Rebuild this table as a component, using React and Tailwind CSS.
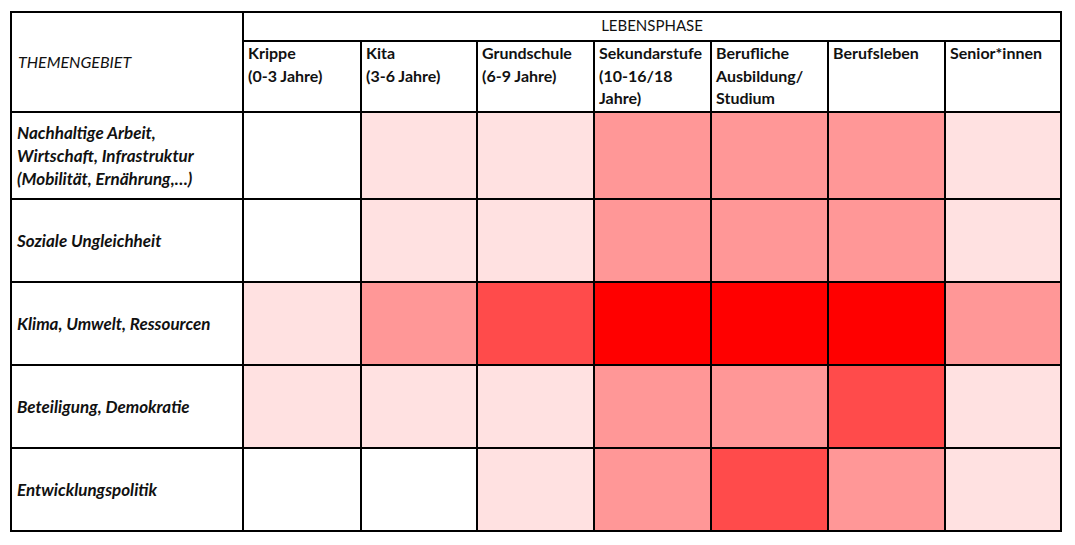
import React from "react";

const COLS = [
  ["Krippe", "(0-3 Jahre)"],
  ["Kita", "(3-6 Jahre)"],
  ["Grundschule", "(6-9 Jahre)"],
  ["Sekundarstufe", "(10-16/18", "Jahre)"],
  ["Berufliche", "Ausbildung/", "Studium"],
  ["Berufsleben"],
  ["Senior*innen"],
];

// 0 white, 1 light, 2 medium, 3 strong, 4 full red
const SHADES = ["bg-white", "bg-[#ffe1e1]", "bg-[#ff9797]", "bg-[#ff4b4b]", "bg-[#ff0000]"];

const ROWS = [
  { label: ["Nachhaltige Arbeit,", "Wirtschaft, Infrastruktur", "(Mobilität, Ernährung,…)"], v: [0, 1, 1, 2, 2, 2, 1] },
  { label: ["Soziale Ungleichheit"], v: [0, 1, 1, 2, 2, 2, 1] },
  { label: ["Klima, Umwelt, Ressourcen"], v: [1, 2, 3, 4, 4, 4, 2] },
  { label: ["Beteiligung, Demokratie"], v: [1, 1, 1, 2, 2, 3, 1] },
  { label: ["Entwicklungspolitik"], v: [0, 0, 1, 2, 3, 2, 1] },
];

export default function App() {
  return (
    <div className="min-h-screen bg-white pl-[10px] pt-[11px] text-[15px] leading-[22.5px] text-[#111] [font-family:Lato,'Liberation_Sans',sans-serif]">
      <div className="grid w-[1052px] grid-cols-[230px_116px_114px_115px_115px_115px_115px_114px] grid-rows-[27px_69px_85px_81px_81px_81px_81px] gap-[2px] bg-black p-[2px]">
        <div className="row-span-2 flex items-center bg-white pl-[6px] text-[16px] italic">THEMENGEBIET</div>
        <div className="col-span-7 bg-white pt-[1px] text-center">LEBENSPHASE</div>
        {COLS.map((c, i) => (
          <div key={i} className="bg-white px-[4px] text-[16px] font-bold">
            {c.map((l) => (
              <div key={l}>{l}</div>
            ))}
          </div>
        ))}
        {ROWS.map((r, i) => (
          <React.Fragment key={i}>
            <div className="flex flex-col justify-center bg-white pl-[5px] text-[17px] leading-[23px] font-bold italic">
              {r.label.map((l) => (
                <div key={l}>{l}</div>
              ))}
            </div>
            {r.v.map((s, j) => (
              <div key={j} className={SHADES[s]} />
            ))}
          </React.Fragment>
        ))}
      </div>
    </div>
  );
}
